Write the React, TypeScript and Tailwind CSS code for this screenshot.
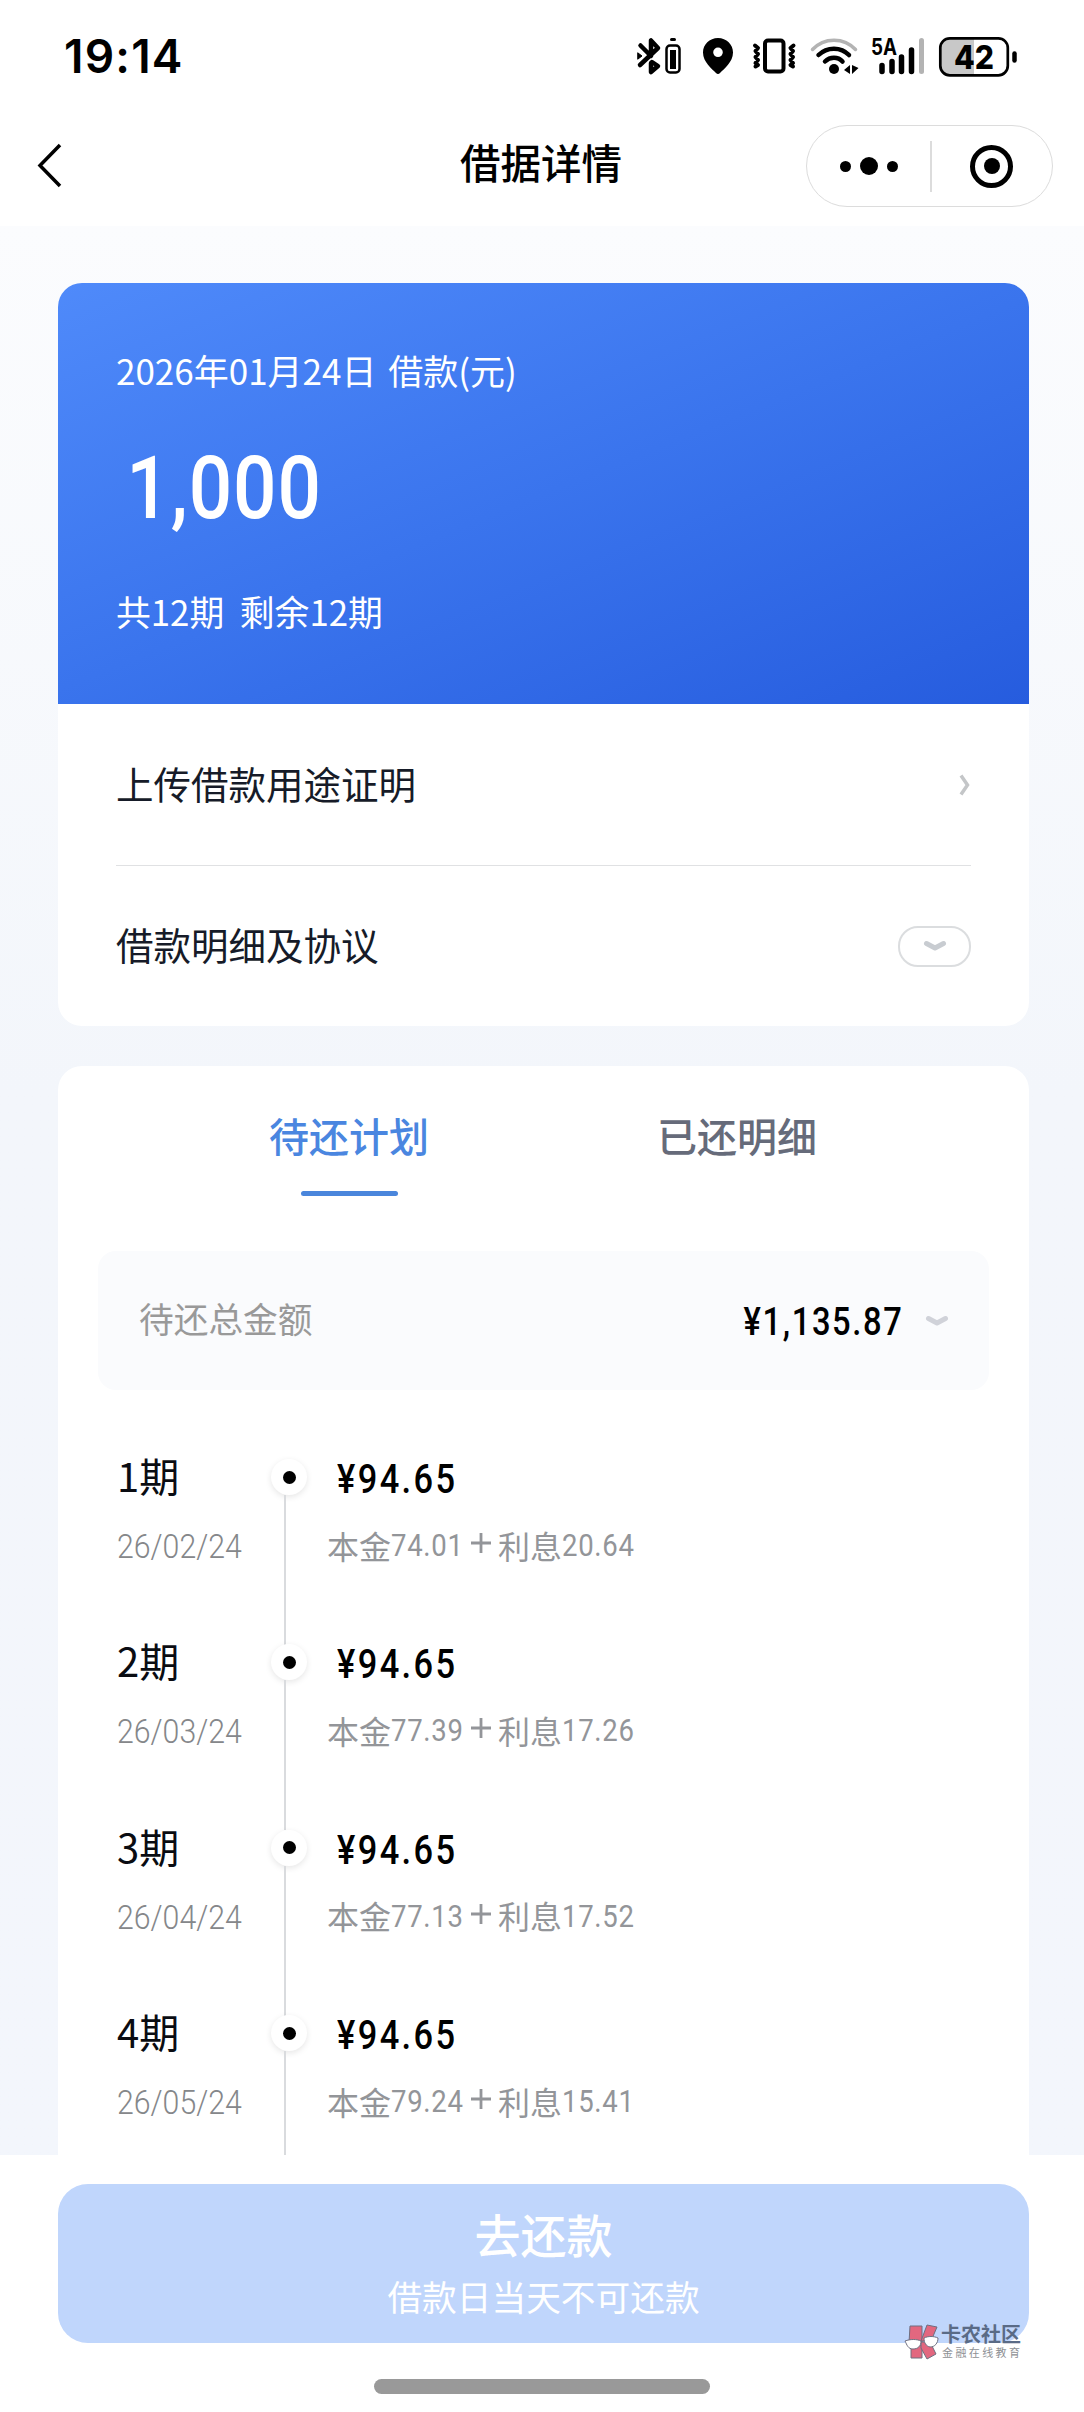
type Period = {
  no: number;
  date: string;
  amount: string;
  principal: string;
  interest: string;
};

const periods: Period[] = [
  { no: 1, date: "26/02/24", amount: "94.65", principal: "74.01", interest: "20.64" },
  { no: 2, date: "26/03/24", amount: "94.65", principal: "77.39", interest: "17.26" },
  { no: 3, date: "26/04/24", amount: "94.65", principal: "77.13", interest: "17.52" },
  { no: 4, date: "26/05/24", amount: "94.65", principal: "79.24", interest: "15.41" },
];

function StatusIcons() {
  return (
    <svg width="400" height="44" viewBox="630 34 400 44" fill="none" strokeLinecap="round" strokeLinejoin="round">
      {/* bluetooth + device battery */}
      <path d="M640.500 45.500L651 56M640 65L658 48L651 40.500V55M652 62L658 66L651 72V63" stroke="#000" strokeWidth="4.500" />
      <path d="M638 53L642 56L638 59Z" fill="#000" stroke="#000" strokeWidth="1" />
      <rect x="666.500" y="45.500" width="13" height="27" rx="3.500" stroke="#000" strokeWidth="2.500" />
      <rect x="670" y="50" width="6" height="19" fill="#000" />
      <path d="M671.500 39.500H674.500" stroke="#000" strokeWidth="3" />

      {/* location */}
      <path
        fillRule="evenodd"
        d="M718 38C709.500 38 703 44.500 703 52.500C703 62 712 69 716 73C717.200 74.300 718.800 74.300 720 73C724 69 733 62 733 52.500C733 44.500 726.500 38 718 38ZM718 47.500A4.800 4.800 0 1 1 718 57.100A4.800 4.800 0 1 1 718 47.500Z"
        fill="#000"
      />

      {/* vibrate */}
      <rect x="765" y="40.500" width="18.500" height="31" rx="3" stroke="#000" strokeWidth="4" />
      <path d="M755 45.500L758 48L755.500 51L758 54L755.500 57L758 60L755.500 63L758 65L755.500 66.500" stroke="#000" strokeWidth="4" />
      <path d="M793.500 45.500L790.500 48L793 51L790.500 54L793 57L790.500 60L793 63L790.500 65L793 66.500" stroke="#000" strokeWidth="4" />

      {/* wifi */}
      <path d="M812.500 49.500C824 37 844 37 855.500 49.500" stroke="#b3b3b3" strokeWidth="3.500" />
      <path d="M818.500 55C827 46.500 841 46.500 849 55" stroke="#000" strokeWidth="4.500" />
      <path d="M825 61.500C830 56.500 838 56.500 842.500 61.500" stroke="#000" strokeWidth="4.500" />
      <circle cx="834" cy="69" r="5" fill="#000" />
      <path d="M844 70L850 65V74ZM852 65V74L858.500 68Z" fill="#000" />

      {/* cell signal */}
      <path d="M882 65.500V71.500M892 61.500V71.500M901.500 57V71.500M911.500 50V71.500" stroke="#000" strokeWidth="5.500" />
      <path d="M921.500 40.500V71.500" stroke="#b3b3b3" strokeWidth="5" />
      <text x="871" y="55" fontSize="23" fontWeight="700" fill="#000" textLength="26" lengthAdjust="spacingAndGlyphs">
        5A
      </text>

      {/* battery */}
      <path d="M950 38.500H974V75.500H950A9 9 0 0 1 940.500 66V48A9 9 0 0 1 950 38.500Z" fill="#c8c8c8" />
      <rect x="940.300" y="38.300" width="67.500" height="37" rx="9.500" stroke="#000" strokeWidth="2.700" />
      <path d="M1014.500 53.500V60.500" stroke="#000" strokeWidth="4.500" />
      <text x="954" y="69" fontSize="33" fontWeight="800" fill="#000" textLength="40" lengthAdjust="spacingAndGlyphs">
        42
      </text>
    </svg>
  );
}

function StatusBar() {
  return (
    <div className="flex h-[112px] items-center justify-between pr-[54px] pl-[64px] font-['Inter','Noto_Sans_CJK_SC',sans-serif]">
      <div className="text-[46px] leading-[48px] font-semibold tracking-[1.2px]">19:14</div>
      <StatusIcons />
    </div>
  );
}

function NavBar() {
  return (
    <div className="flex h-[114px] items-start justify-between pr-[31px] pl-[36px]">
      <div className="flex h-[106px] w-[240px] items-center">
        <svg width="28" height="46" viewBox="0 0 28 46" fill="none">
          <path d="M24 3L4 23.500L24 44" stroke="#000" strokeWidth="3.500" />
        </svg>
      </div>
      <h1 className="pt-[21px] text-[40.5px] leading-[58px] font-medium">借据详情</h1>
      <div className="mt-[13px] flex h-[82px] w-[247px] items-center rounded-full border border-[#dcdcdc]">
        <div className="flex w-[123px] items-center justify-center gap-[9px]">
          <i className="h-[11px] w-[11px] rounded-full bg-black" />
          <i className="h-[18px] w-[18px] rounded-full bg-black" />
          <i className="h-[11px] w-[11px] rounded-full bg-black" />
        </div>
        <div className="h-[51px] w-[1.5px] bg-[#dcdcdc]" />
        <div className="flex flex-1 justify-center">
          <div className="flex h-[43px] w-[43px] items-center justify-center rounded-full border-[5px] border-black">
            <i className="h-[16px] w-[16px] rounded-full bg-black" />
          </div>
        </div>
      </div>
    </div>
  );
}

function ChevronDown({ color }: { color: string }) {
  return (
    <svg width="24" height="12" viewBox="0 0 24 12" fill="none">
      <path d="M3.500 3.500L12 8L20.500 3.500" stroke={color} strokeWidth="5" strokeLinecap="round" strokeLinejoin="round" />
    </svg>
  );
}

function LoanCard() {
  return (
    <section className="overflow-hidden rounded-[24px] bg-white">
      <div className="h-[421px] bg-linear-[158deg] from-[#4f8afa] via-[#3a74ed] to-[#265cde] px-[58px] pt-[62px] text-white">
        <div className="text-[35px] leading-[50px] [word-spacing:4px]">2026年01月24日 借款(元)</div>
        <div className="mt-[40px] ml-[5px] origin-left scale-x-[.88] pl-[6px] font-['Roboto',sans-serif] text-[87px] leading-[106px] font-medium tracking-[1px]">
          1,000
        </div>
        <div className="mt-[45px] text-[34.8px] leading-[50px] whitespace-pre">共12期  剩余12期</div>
      </div>
      <div className="px-[58px] text-[37.5px] text-[#161b28]">
        <div className="flex h-[162px] items-center justify-between border-b-[1.5px] border-[#e0e1e3]">
          <span className="mb-[3px]">上传借款用途证明</span>
          <svg width="12" height="24" viewBox="0 0 12 24" fill="none">
            <path d="M2 2.500L8.500 12L2 21.500" stroke="#c4c6c8" strokeWidth="3.500" />
          </svg>
        </div>
        <div className="flex h-[160px] items-center justify-between">
          <span className="mb-[4px]">借款明细及协议</span>
          <div className="flex h-[41px] w-[73px] items-center justify-center rounded-[20px] border-2 border-[#dbdddf]">
            <ChevronDown color="#c8ccd1" />
          </div>
        </div>
      </div>
    </section>
  );
}

function PeriodRow({ p }: { p: Period }) {
  return (
    <li className="flex h-[185.4px]">
      <div className="w-[154px]">
        <div className="-mt-[2px] text-[40px] leading-[58px] text-[#0a0c12]">{p.no}期</div>
        <div className="mt-[18px] origin-left scale-x-[.89] font-['Roboto',sans-serif] text-[34px] leading-[48px] font-light text-[#85878a]">
          {p.date}
        </div>
      </div>
      <div className="flex w-[36px] flex-col items-center pt-[11px]">
        <div className="flex h-[36px] w-[36px] shrink-0 items-center justify-center rounded-full bg-white shadow-[0_2px_6px_rgba(0,0,0,0.1)]">
          <i className="h-[13px] w-[13px] rounded-full bg-black" />
        </div>
        <div className="mr-[8px] h-[150px] w-[2px] shrink-0 bg-[#d9dbde]" />
      </div>
      <div className="pl-[20px]">
        <div className="ml-[10px] origin-left scale-x-[.86] font-['Roboto',sans-serif] text-[40px] leading-[64px] font-medium tracking-[2.8px] text-black">
          ¥{p.amount}
        </div>
        <div className="mt-[8px] flex items-center text-[32px] leading-[48px] text-[#939599]">
          <span>本金</span>
          <span className="w-[81px] origin-left scale-x-[.86] pt-[1px] font-['Roboto',sans-serif] tracking-[0.8px]">{p.principal}</span>
          <svg width="22" height="22" viewBox="0 0 22 22" className="mr-[6px] mb-[3px] -ml-[2px]">
            <path d="M11 1V21M1 11H21" stroke="#939599" strokeWidth="2.800" />
          </svg>
          <span>利息</span>
          <span className="origin-left scale-x-[.86] pt-[1px] font-['Roboto',sans-serif] tracking-[0.8px]">{p.interest}</span>
        </div>
      </div>
    </li>
  );
}

function PlanCard() {
  return (
    <section className="mt-[40px] h-[1140px] rounded-t-[24px] bg-white px-[40px]">
      <div className="flex h-[131px] text-[40px] leading-[58px] font-medium">
        <div className="ml-[171px] flex w-[160px] flex-col items-center pt-[40px] text-[#4a86e0]">
          待还计划
          <div className="mt-[27px] h-[5px] w-[97px] rounded-full bg-[#4a86dc]" />
        </div>
        <div className="ml-[228px] pt-[40px] text-[#666b7a]">已还明细</div>
      </div>
      <div className="mt-[54px] flex h-[139px] items-center rounded-[18px] bg-[#fafbfd] pr-[40px] pl-[41px]">
        <span className="mb-[5px] flex-1 text-[34.7px] text-[#999]">待还总金额</span>
        <span className="mt-[4px] origin-right scale-x-[.86] pr-[25px] font-['Roboto',sans-serif] text-[38px] font-medium tracking-[1.9px]">
          ¥1,135.87
        </span>
        <ChevronDown color="#d0d2d9" />
      </div>
      <ul className="mt-[58px] pl-[19px]">
        {periods.map((p) => (
          <PeriodRow key={p.no} p={p} />
        ))}
      </ul>
    </section>
  );
}

function Watermark() {
  return (
    <div className="absolute top-[168px] left-[903px] flex items-start gap-[2px]">
      <svg width="36" height="40" viewBox="0 0 36 40" strokeLinejoin="round">
        <g fill="#e2677f" stroke="#6e6f80" strokeWidth="1">
          <path d="M7 3H19V20H6Z" />
          <path d="M24 2L34 4L28 18H18Z" />
          <path d="M8 22H19V35H8Z" />
          <path d="M18 19H27L33 31L24 36L18 25Z" />
        </g>
        <g fill="#fff" stroke="#6e6f80" strokeWidth="1">
          <path d="M2 18C7 16 14 16 18 18C18 23 15 26 10 26C5 26 4 22 2 18Z" />
          <path d="M21 15C25 13 31 13 35 15C35 20 32 24 27 24C23 23 21 20 21 15Z" />
        </g>
      </svg>
      <div>
        <div className="text-[20px] leading-[22px] font-bold text-[#5a6b86]">卡农社区</div>
        <div className="mt-[1px] pl-[1px] text-[11px] leading-[13px] tracking-[2.4px] text-[#8e9094]">金融在线教育</div>
      </div>
    </div>
  );
}

function Footer() {
  return (
    <footer className="relative flex h-[257px] flex-col items-center bg-white pt-[29px]">
      <button className="ml-[3px] flex h-[159px] w-[971px] flex-col items-center rounded-[30px] bg-[#c0d6fc] pt-[16px] text-white">
        <span className="text-[46px] leading-[66px] font-medium">去还款</span>
        <span className="mt-[5px] text-[34.7px] leading-[50px]">借款日当天不可还款</span>
      </button>
      <div className="mt-[36px] h-[15px] w-[336px] rounded-full bg-[#999]" />
      <Watermark />
    </footer>
  );
}

export default function App() {
  return (
    <div className="flex h-[2412px] w-[1084px] flex-col overflow-hidden bg-white font-['Noto_Sans_CJK_SC',sans-serif] text-black">
      <StatusBar />
      <NavBar />
      <main className="min-h-0 flex-1 overflow-hidden bg-linear-to-b from-[#fbfcfe] via-[#f3f6fb] via-45% to-[#f3f6fc] pt-[57px] pr-[55px] pl-[58px]">
        <LoanCard />
        <PlanCard />
      </main>
      <Footer />
    </div>
  );
}
